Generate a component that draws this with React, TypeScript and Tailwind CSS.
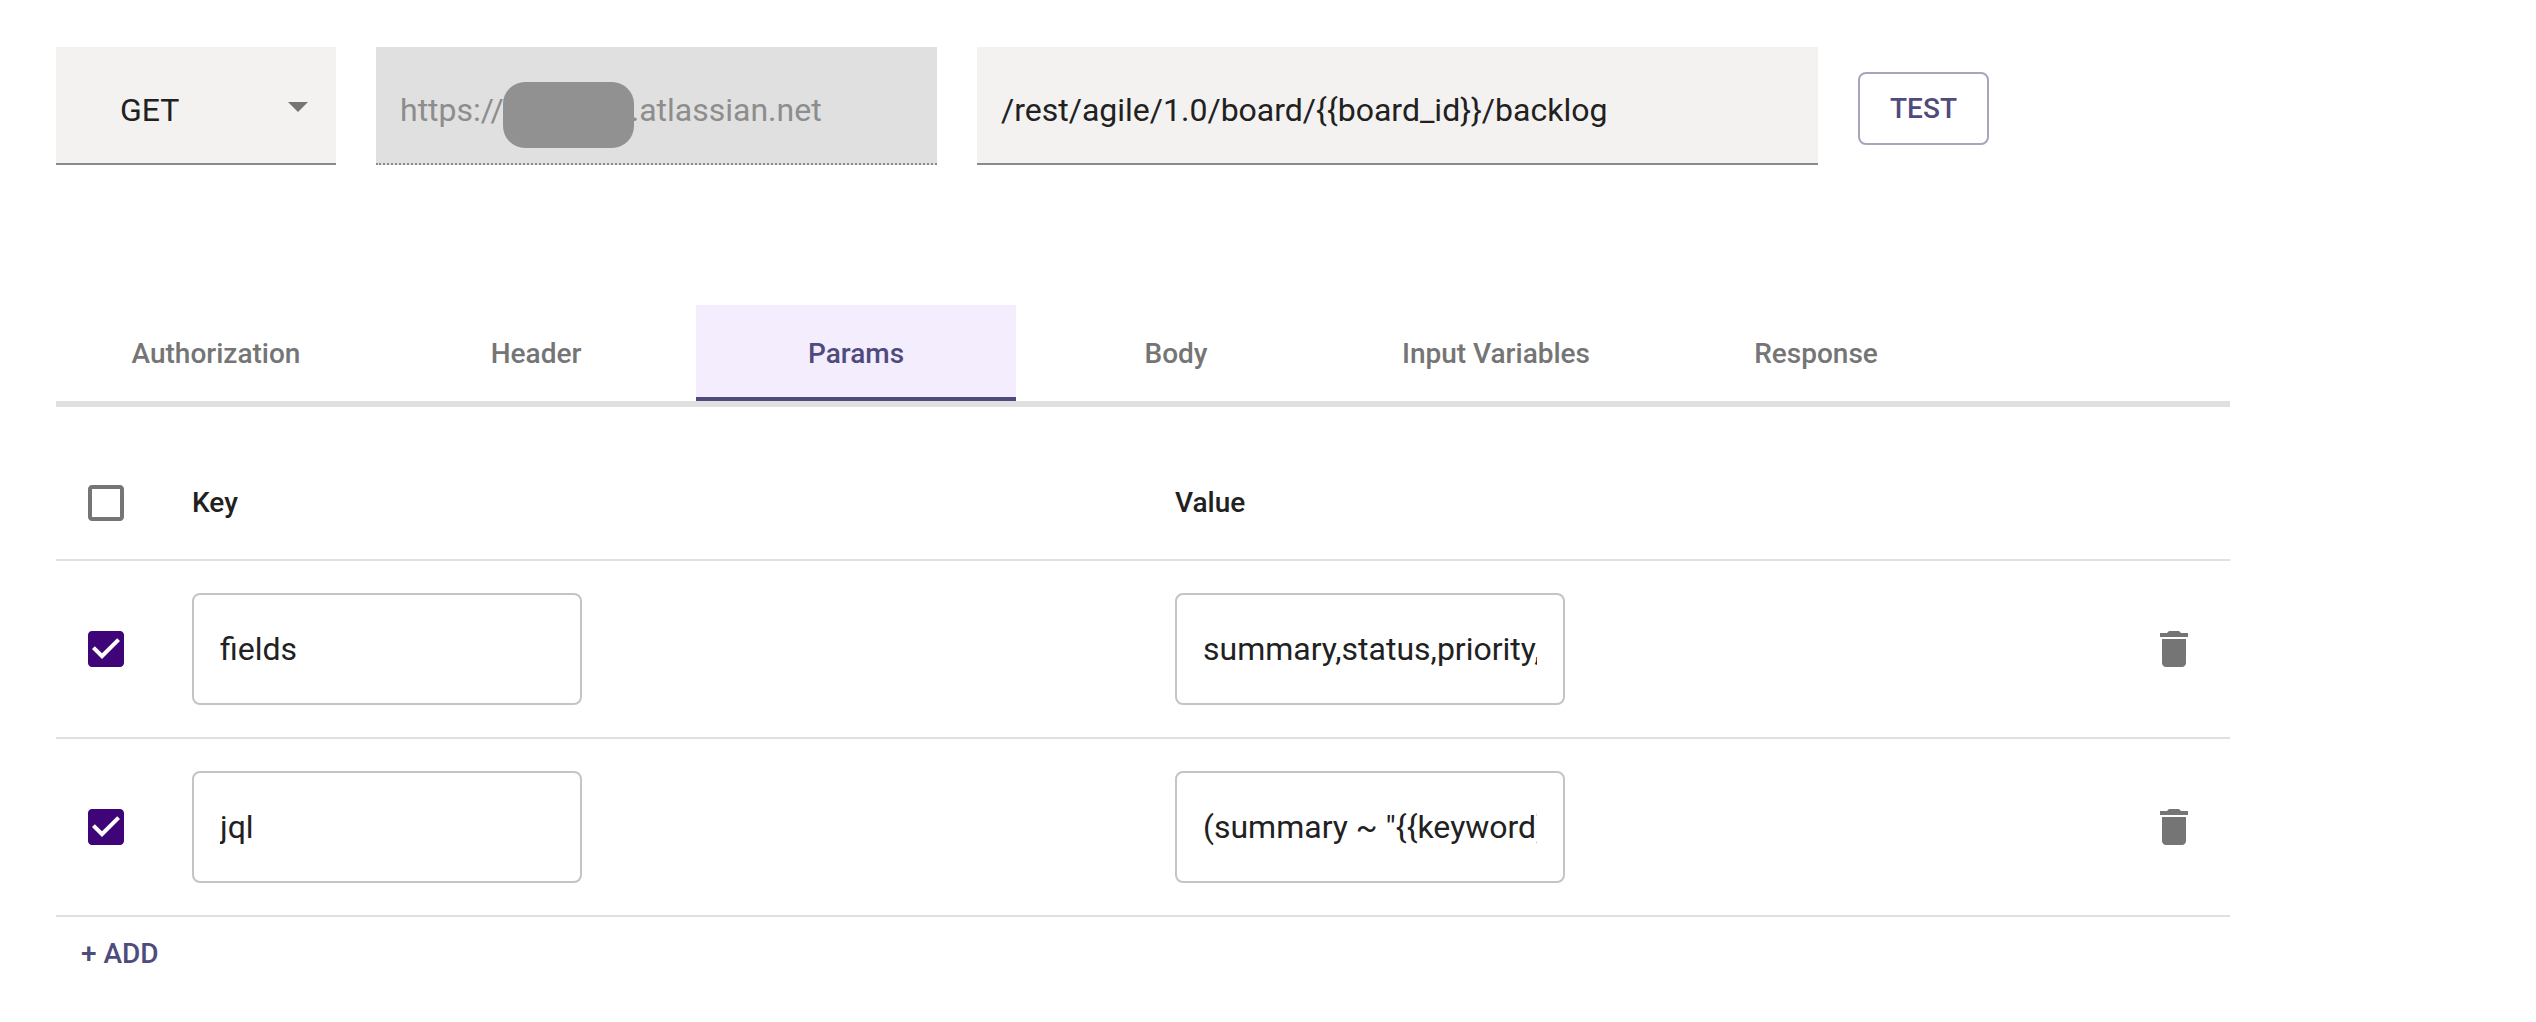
const tabs = ["Authorization", "Header", "Params", "Body", "Input Variables", "Response"];

const rows = [
  { id: "fields", name: "fields", value: "summary,status,priority,assignee" },
  { id: "jql", name: "jql", value: '(summary ~ "{{keyword}}")' },
];

function Trash() {
  return (
    <svg viewBox="0 0 24 24" className="size-12 fill-[#757575]">
      <path d="M6 19c0 1.1.9 2 2 2h8c1.1 0 2-.9 2-2V7H6v12zM19 4h-3.5l-1-1h-5l-1 1H5v2h14V4z" />
    </svg>
  );
}

function Check({ checked }: { checked: boolean }) {
  return checked ? (
    <svg viewBox="0 0 24 24" className="size-12 fill-[#3f0478]">
      <path d="M19 3H5c-1.11 0-2 .9-2 2v14c0 1.1.89 2 2 2h14c1.11 0 2-.9 2-2V5c0-1.1-.89-2-2-2zm-9 14l-5-5 1.41-1.41L10 14.17l7.59-7.59L19 8l-9 9z" />
    </svg>
  ) : (
    <svg viewBox="0 0 24 24" className="size-12 fill-[#757575]">
      <path d="M19 5v14H5V5h14m0-2H5c-1.1 0-2 .9-2 2v14c0 1.1.9 2 2 2h14c1.1 0 2-.9 2-2V5c0-1.1-.9-2-2-2z" />
    </svg>
  );
}

function Field({ text }: { text: string }) {
  return (
    <div className="flex h-[112px] w-[390px] items-center rounded-lg border-2 border-[#c4c4c4] px-[26px]">
      <div className="overflow-hidden whitespace-nowrap">{text}</div>
    </div>
  );
}

export default function App() {
  return (
    <main className="h-[1022px] w-[2536px] overflow-hidden bg-white pt-[47px] pl-[56px] font-[Roboto,sans-serif] text-[32px] text-[#212121]">
      <div className="flex h-[118px] gap-10">
        <div className="flex w-[280px] items-center justify-between border-b-2 border-[#8b8a89] bg-[#f3f2f0] pt-[10px] pr-[14px] pl-16">
          <span>GET</span>
          <svg viewBox="0 0 24 24" className="-mt-2 size-12 fill-[#757575]"><path d="M7 10l5 5 5-5z" /></svg>
        </div>
        <div className="relative flex w-[561px] items-center border-b-2 border-dotted border-[#8b8b8b] bg-[#e0e0e0] pt-[10px] pl-6 text-[#8d8d8d]">
          <span>https://</span>
          <span className="ml-[127px]">.atlassian.net</span>
          <div className="absolute top-[35px] left-[127px] h-[66px] w-[131px] rounded-[22px] bg-[#919191]" />
        </div>
        <div className="flex w-[841px] items-center border-b-2 border-[#8b8a89] bg-[#f3f2f0] pt-[10px] pl-6">
          /rest/agile/1.0/board/{"{{board_id}}"}/backlog
        </div>
        <button className="mt-[25px] flex h-[73px] w-[131px] items-center justify-center rounded-lg border-2 border-[#a7a4be] pt-px text-[28px] font-medium text-[#4f4b7c]">TEST</button>
      </div>
      <nav className="mt-[140px] flex h-[102px] w-[2174px] border-b-[6px] border-[#e0e0e0] text-[28px] font-medium text-[#757575]">
        {tabs.map((t) => (
          <div key={t} className={t === "Params" ? "flex h-[96px] w-[320px] items-center justify-center border-b-4 border-[#4f4b7c] bg-[#f3edfd] pt-[5px] text-[#4f4b7c]" : "flex h-[96px] w-[320px] items-center justify-center border-b-4 border-transparent pt-[5px]"}>{t}</div>
        ))}
      </nav>
      <section className="mt-[38px] w-[2174px]">
        <div className="flex h-[116px] items-center border-b-2 border-[#e0e0e0] pt-[2px] pl-[26px] text-[28px] font-medium">
          <Check checked={false} />
          <div className="ml-[62px] w-[983px]">Key</div>
          <div>Value</div>
        </div>
        {rows.map((r) => (
          <div key={r.id} className="flex h-[178px] items-center border-b-2 border-[#e0e0e0] pr-8 pl-[26px]">
            <Check checked />
            <div className="ml-[62px] w-[983px]"><Field text={r.name} /></div>
            <Field text={r.value} />
            <div className="ml-auto"><Trash /></div>
          </div>
        ))}
        <button className="mt-4 ml-[25px] block text-[28px] font-medium text-[#4f4b7c]">+ ADD</button>
      </section>
    </main>
  );
}
